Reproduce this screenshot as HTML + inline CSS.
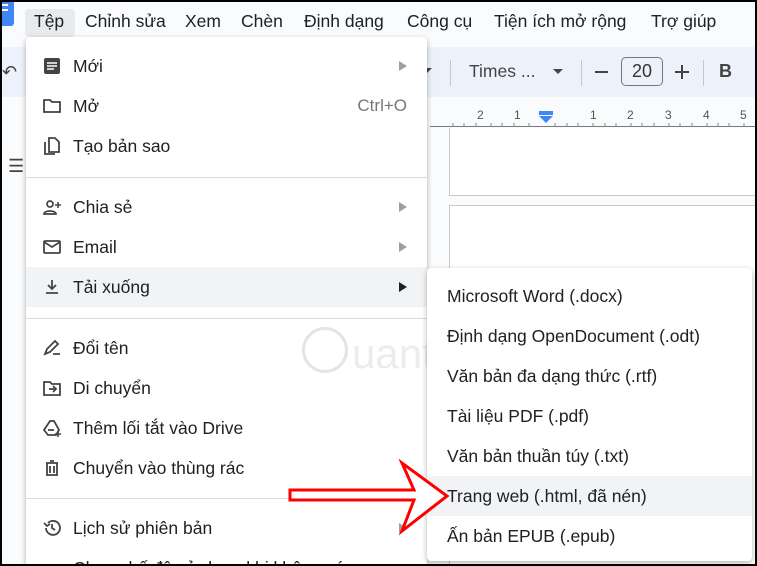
<!DOCTYPE html>
<html style="width:757px;height:566px;overflow:hidden"><head><meta charset="utf-8"><style>
*{margin:0;padding:0;box-sizing:border-box}
html,body{width:757px;height:566px;overflow:hidden}
body{position:relative;background:#f9fbfd;font-family:"Liberation Sans",Arial,sans-serif;color:#202124}
.abs{position:absolute}
.mb{top:11px;font-size:17.5px;color:#202124;white-space:nowrap}
.menu{position:absolute;background:#fff;box-shadow:0 2px 6px rgba(0,0,0,.3);border-radius:4px}
.it{position:absolute;left:0;right:0;height:40px;font-size:17.5px;line-height:40px;white-space:nowrap}
.it .t{position:absolute;left:47px}
.it .ic{position:absolute;left:16px;top:10px;width:20px;height:20px}
.hl{background:#f1f3f4}
.tri{position:absolute;right:20px;top:15px;width:0;height:0;border-left:8px solid #9aa0a6;border-top:5px solid transparent;border-bottom:5px solid transparent}
.div{position:absolute;left:0;right:0;height:1px;background:#dadce0}
.sub .it .t{left:20px}
</style></head><body>
<div class="abs" style="left:-2px;top:-4px;width:16px;height:30px;background:#4285f4;border-radius:3px"></div>
<div class="abs" style="left:0;top:4px;width:8px;height:2px;background:#fff"></div>
<div class="abs" style="left:0;top:9px;width:8px;height:2px;background:#fff"></div>
<div class="abs" style="left:25px;top:9px;width:50px;height:28px;background:#e8eaed;border-radius:4px"></div>
<div class="abs mb" style="left:34px">Tệp</div>
<div class="abs mb" style="left:85px">Chỉnh sửa</div>
<div class="abs mb" style="left:185px">Xem</div>
<div class="abs mb" style="left:241px">Chèn</div>
<div class="abs mb" style="left:304px">Định dạng</div>
<div class="abs mb" style="left:407px">Công cụ</div>
<div class="abs mb" style="left:494px">Tiện ích mở rộng</div>
<div class="abs mb" style="left:651px">Trợ giúp</div>
<div class="abs" style="left:0;top:47px;width:757px;height:50px;background:#edf2fa"></div>
<div class="abs" style="left:2px;top:62px;font-size:18px;color:#444">↶</div>
<div class="abs" style="left:422px;top:68px;border-top:5px solid #444;border-left:5px solid transparent;border-right:5px solid transparent"></div>
<div class="abs" style="left:450px;top:60px;width:1px;height:26px;background:#c7c7c7"></div>
<div class="abs" style="left:469px;top:61px;font-size:17.5px;color:#444">Times ...</div>
<div class="abs" style="left:553px;top:69px;border-top:5px solid #444;border-left:5px solid transparent;border-right:5px solid transparent"></div>
<div class="abs" style="left:581px;top:60px;width:1px;height:26px;background:#c7c7c7"></div>
<div class="abs" style="left:595px;top:71px;width:13px;height:2px;background:#444"></div>
<div class="abs" style="left:621px;top:57px;width:42px;height:29px;border:1px solid #777;border-radius:5px;font-size:18px;text-align:center;line-height:27px;color:#333">20</div>
<div class="abs" style="left:675px;top:71px;width:14px;height:2px;background:#444"></div>
<div class="abs" style="left:681px;top:65px;width:2px;height:14px;background:#444"></div>
<div class="abs" style="left:703px;top:60px;width:1px;height:26px;background:#c7c7c7"></div>
<div class="abs" style="left:719px;top:61px;font-size:18px;font-weight:bold;color:#444">B</div>
<div class="abs" style="left:430px;top:97px;width:327px;height:30px;background:#f9fbfd;border-bottom:1px solid #777"></div>
<svg class="abs" style="left:430px;top:97px" width="327" height="32">
<g stroke="#888" stroke-width="1">
<path d="M23 26v4M34 26v4M46 26v4M61 26v4M72 26v4M84 26v4M99 26v4M125 26v4M137 26v4M148 26v4M163 26v4M175 26v4M186 26v4M201 26v4M212 26v4M224 26v4M239 26v4M250 26v4M262 26v4M277 26v4M288 26v4M299 26v4M314 26v4M326 26v4"/>
</g>
<g font-size="12" fill="#555" font-family="Liberation Sans"><text x="47" y="22">2</text><text x="84" y="22">1</text><text x="160" y="22">1</text><text x="197" y="22">2</text><text x="235" y="22">3</text><text x="273" y="22">4</text><text x="310" y="22">5</text></g>
<rect x="109" y="14" width="14" height="4" fill="#4285f4"/><path d="M109 19h14l-7 7z" fill="#4285f4"/>
</svg>
<div class="abs" style="left:449px;top:128px;width:308px;height:68px;background:#fff;border:1px solid #c7c7c7;border-top:none"></div>
<div class="abs" style="left:449px;top:205px;width:308px;height:370px;background:#fff;border:1px solid #c7c7c7"></div>
<div class="abs" style="left:8px;top:156px;font-size:18px;color:#444">☰</div>
<div class="menu" style="left:26px;top:37px;width:401px;height:540px">
 <div class="it" style="top:9px"><svg class="ic" viewBox="0 0 20 20"><rect x="2" y="2" width="16" height="16" rx="2" fill="#444"/><path d="M5 7h10M5 10h10M5 13h7" stroke="#fff" stroke-width="1.6"/></svg><span class="t">Mới</span><div class="tri"></div></div>
 <div class="it" style="top:49px"><svg class="ic" viewBox="0 0 20 20"><path d="M2 4h6l2 2h8v10H2z" fill="none" stroke="#444" stroke-width="1.8"/></svg><span class="t">Mở</span><span style="position:absolute;right:20px;color:#777;font-size:17px">Ctrl+O</span></div>
 <div class="it" style="top:89px"><svg class="ic" viewBox="0 0 20 20"><path d="M7 2h6l4 4v10H7z M3 6v12h10" fill="none" stroke="#444" stroke-width="1.8"/></svg><span class="t">Tạo bản sao</span></div>
 <div class="div" style="top:140px"></div>
 <div class="it" style="top:150px"><svg class="ic" viewBox="0 0 20 20"><circle cx="8" cy="7" r="3" fill="none" stroke="#444" stroke-width="1.7"/><path d="M2 17c0-4 12-4 12 0z" fill="none" stroke="#444" stroke-width="1.7"/><path d="M16 5v6M13 8h6" stroke="#444" stroke-width="1.6"/></svg><span class="t">Chia sẻ</span><div class="tri"></div></div>
 <div class="it" style="top:190px"><svg class="ic" viewBox="0 0 20 20"><rect x="2" y="4" width="16" height="12" rx="1" fill="none" stroke="#444" stroke-width="1.8"/><path d="M2 5l8 5 8-5" fill="none" stroke="#444" stroke-width="1.8"/></svg><span class="t">Email</span><div class="tri"></div></div>
 <div class="it hl" style="top:230px"><svg class="ic" viewBox="0 0 20 20"><path d="M10 3v9M6 8l4 4 4-4M4 16h12" fill="none" stroke="#444" stroke-width="1.8"/></svg><span class="t">Tải xuống</span><div class="tri" style="border-left-color:#202124"></div></div>
 <div class="div" style="top:281px"></div>
 <div class="it" style="top:291px"><svg class="ic" viewBox="0 0 20 20"><path d="M3 16l2-5 8-8 3 3-8 8z M11 16h7" fill="none" stroke="#444" stroke-width="1.8"/></svg><span class="t">Đổi tên</span></div>
 <div class="it" style="top:331px"><svg class="ic" viewBox="0 0 20 20"><path d="M2 4h6l2 2h8v11H2z M7 11h6M11 8l3 3-3 3" fill="none" stroke="#444" stroke-width="1.8"/></svg><span class="t">Di chuyển</span></div>
 <div class="it" style="top:371px"><svg class="ic" viewBox="0 0 20 20"><path d="M8 3h4l5 9-3 5H6l-4-5z M6 12h6" fill="none" stroke="#444" stroke-width="1.8"/><path d="M16 13v6M13 16h6" stroke="#444" stroke-width="1.6"/></svg><span class="t">Thêm lối tắt vào Drive</span></div>
 <div class="it" style="top:411px"><svg class="ic" viewBox="0 0 20 20"><path d="M4 5h12M8 3h4M5 5v12h10V5M8 8v7M12 8v7" fill="none" stroke="#444" stroke-width="1.8"/></svg><span class="t">Chuyển vào thùng rác</span></div>
 <div class="div" style="top:461px"></div>
 <div class="it" style="top:471px"><svg class="ic" viewBox="0 0 20 20"><path d="M4 10a7 7 0 1 0 2-5M2 5l3 3 3-2M10 6v4l3 2" fill="none" stroke="#444" stroke-width="1.8"/></svg><span class="t">Lịch sử phiên bản</span><div class="tri"></div></div>
 <div class="it" style="top:511px"><span class="t">Chọn chế độ sử dụng khi không có mạng</span></div>
</div>
<div class="abs" style="left:302px;top:327px;width:46px;height:46px;border:3px solid #e4e4e4;border-radius:50%"></div>
<div class="abs" style="left:352px;top:330px;font-size:42px;color:#ececec">uantrimang</div>
<div class="menu sub" style="left:427px;top:268px;width:325px;height:293px">
 <div class="it" style="top:8px"><span class="t">Microsoft Word (.docx)</span></div>
 <div class="it" style="top:48px"><span class="t">Định dạng OpenDocument (.odt)</span></div>
 <div class="it" style="top:88px"><span class="t">Văn bản đa dạng thức (.rtf)</span></div>
 <div class="it" style="top:128px"><span class="t">Tài liệu PDF (.pdf)</span></div>
 <div class="it" style="top:168px"><span class="t">Văn bản thuần túy (.txt)</span></div>
 <div class="it hl" style="top:208px"><span class="t">Trang web (.html, đã nén)</span></div>
 <div class="it" style="top:248px"><span class="t">Ấn bản EPUB (.epub)</span></div>
</div>
<svg class="abs" style="left:0;top:0" width="757" height="566">
<path d="M290 490H414L402 463L447 496L402 531L414 500H290Z" fill="#fff" stroke="#f00" stroke-width="3"/>
</svg>
<div class="abs" style="left:0;top:0;width:757px;height:566px;border:2px solid #000;pointer-events:none"></div>
</body></html>
